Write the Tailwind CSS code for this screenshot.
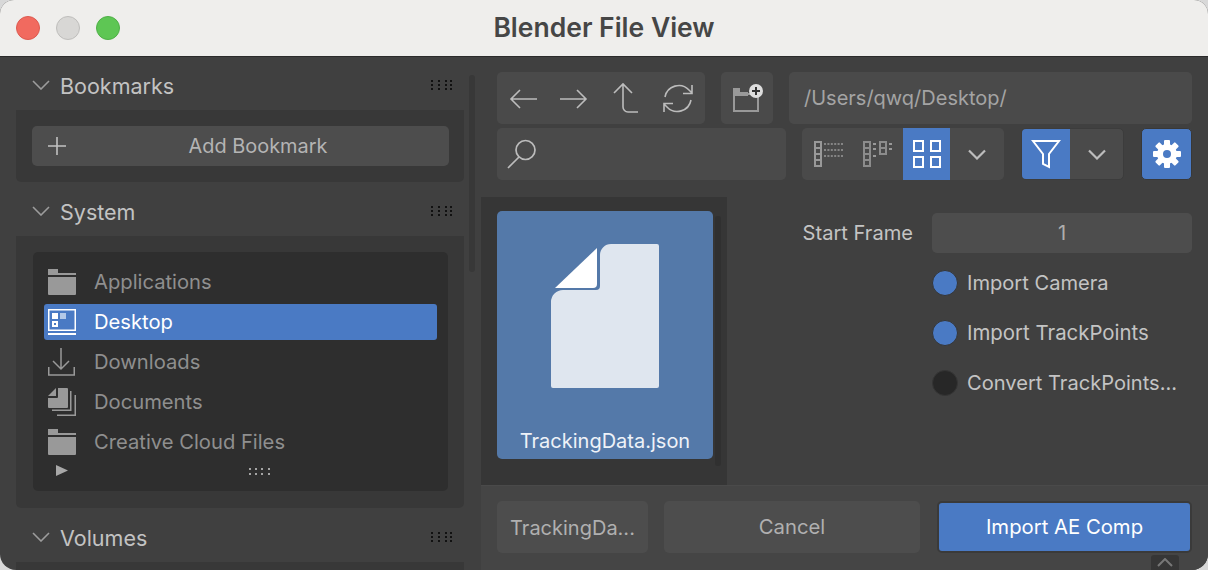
<!DOCTYPE html>
<html>
  <head>
    <meta charset="UTF-8" />
    <script src="https://cdn.jsdelivr.net/npm/@tailwindcss/browser@4"></script>
    <title>Blender File View</title>
  </head>
  <body class="bg-[#d8d8d8] font-['Inter','Liberation_Sans',sans-serif]">
    <div class="w-[1208px] h-[570px] rounded-t-[14px] rounded-b-[16px] overflow-hidden flex flex-col relative bg-[#404040]">
      <!-- title bar -->
      <div class="h-[57px] shrink-0 bg-[#efeeec] border-b border-[#2b2b2b] flex items-center relative">
        <div class="flex gap-[16px] pl-[16px] mb-[1px]">
          <span class="w-[24px] h-[24px] rounded-full bg-[#f16a5f] border border-[#dd5a50]"></span>
          <span class="w-[24px] h-[24px] rounded-full bg-[#d8d7d5] border border-[#bfbebc]"></span>
          <span class="w-[24px] h-[24px] rounded-full bg-[#5ec654] border border-[#4fb047]"></span>
        </div>
        <h1 class="absolute inset-x-0 top-[12px] text-center text-[26.5px] leading-[30px] font-semibold text-[#464646]">Blender File View</h1>
      </div>

      <div class="flex flex-1 min-h-0">
        <!-- sidebar -->
        <aside class="w-[481px] shrink-0 relative overflow-hidden">
          <div class="absolute left-[469px] top-[18px] w-[6px] h-[197px] rounded-full bg-[#383838]"></div>

          <div class="h-[53px] flex items-center pt-[3px] pl-[32px] pr-[29px] text-[#c3c3c3] text-[21.5px]">
            <svg class="w-[18px] h-[10px] mr-[10px]" viewBox="0 0 18 10" fill="none" stroke="#9c9c9c" stroke-width="1.6"><path d="M1 1l8 8 8-8" /></svg>
            <span class="flex-1 pt-[2px]">Bookmarks</span>
            <svg class="w-[22px] h-[11px]" viewBox="0 0 22 11" fill="#111"><path d="M1 0h2v2H1zM8 0h2v2H8zM15 0h2v2h-2zM20 0h2v2h-2zM1 4h2v2H1zM8 4h2v2H8zM15 4h2v2h-2zM20 4h2v2h-2zM1 8h2v2H1zM8 8h2v2H8zM15 8h2v2h-2zM20 8h2v2h-2z" /></svg>
          </div>
          <div class="ml-[16px] w-[448px] h-[72px] bg-[#383838] rounded-b-[5px] p-[16px]">
            <button class="w-[417px] h-[40px] bg-[#4d4d4d] rounded-[5px] relative text-[19.9px] text-[#b4b4b4] flex items-center justify-center">
              <svg class="absolute left-[16px] top-[11px] w-[18px] h-[18px]" viewBox="0 0 18 18" stroke="#c2c2c2" stroke-width="1.6"><path d="M9 0v18M0 9h18" /></svg>
              <span class="pl-[35px] pt-[1px]">Add Bookmark</span>
            </button>
          </div>

          <div class="h-[54px] flex items-center pt-[4px] pl-[32px] pr-[29px] text-[#c3c3c3] text-[21.5px]">
            <svg class="w-[18px] h-[10px] mr-[10px]" viewBox="0 0 18 10" fill="none" stroke="#9c9c9c" stroke-width="1.6"><path d="M1 1l8 8 8-8" /></svg>
            <span class="flex-1 pt-[3px]">System</span>
            <svg class="w-[22px] h-[11px]" viewBox="0 0 22 11" fill="#111"><path d="M1 0h2v2H1zM8 0h2v2H8zM15 0h2v2h-2zM20 0h2v2h-2zM1 4h2v2H1zM8 4h2v2H8zM15 4h2v2h-2zM20 4h2v2h-2zM1 8h2v2H1zM8 8h2v2H8zM15 8h2v2h-2zM20 8h2v2h-2z" /></svg>
          </div>
          <div class="ml-[16px] w-[448px] h-[272px] bg-[#383838] rounded-b-[5px] pt-[16px] px-[17px]">
            <div class="w-[415px] h-[239px] bg-[#2e2e2e] rounded-[5px] pt-[12px] px-[11px] relative text-[20.2px]">
              <div class="h-[40px] flex items-center text-[#8f8f8f] pb-[4px]">
                <svg class="w-[28px] h-[26px] ml-[4px] mr-[18px]" viewBox="0 0 28 26" fill="#999"><path d="M0 0h10v4h18v2H0zM0 8h28v17a1 1 0 0 1-1 1H1a1 1 0 0 1-1-1z" /></svg>
                <span>Applications</span>
              </div>
              <div class="h-[36px] flex items-center bg-[#4a7ac4] rounded-[3px] text-white mb-[4px]">
                <svg class="w-[28px] h-[26px] ml-[4px] mr-[18px]" viewBox="0 0 28 26" fill="none"><rect x=".75" y=".75" width="26.5" height="20.5" stroke="#fff" stroke-width="1.5" /><path d="M0 24h28v2H0zM4 4h6v6H4z" fill="#fff" /><path d="M12 4h6v6h-6z" fill="#b4c9e8" /><rect x="5" y="13" width="4" height="4" stroke="#fff" stroke-width="2" /></svg>
                <span>Desktop</span>
              </div>
              <div class="h-[40px] flex items-center text-[#8f8f8f] pb-[4px]">
                <svg class="w-[28px] h-[28px] ml-[4px] mr-[18px]" viewBox="0 0 28 28" fill="none" stroke="#999" stroke-width="1.5"><path d="M13 0v21M5 13l8 8 8-8M.75 19v8h25.5v-8" /></svg>
                <span>Downloads</span>
              </div>
              <div class="h-[40px] flex items-center text-[#8f8f8f] pb-[4px]">
                <svg class="w-[28px] h-[28px] ml-[4px] mr-[18px]" viewBox="0 0 28 28"><path d="M0 8l8-8v8zM10 0h9a1 1 0 0 1 1 1v18a1 1 0 0 1-1 1H1a1 1 0 0 1-1-1V10h9a1 1 0 0 0 1-1z" fill="#999" /><path d="M22.75 3v19.25H4M27.25 7v20.25H9" fill="none" stroke="#999" stroke-width="1.5" /></svg>
                <span>Documents</span>
              </div>
              <div class="h-[40px] flex items-center text-[#8f8f8f] pb-[4px]">
                <svg class="w-[28px] h-[26px] ml-[4px] mr-[18px]" viewBox="0 0 28 26" fill="#999"><path d="M0 0h10v4h18v2H0zM0 8h28v17a1 1 0 0 1-1 1H1a1 1 0 0 1-1-1z" /></svg>
                <span>Creative Cloud Files</span>
              </div>
              <svg class="absolute left-[23px] top-[213px] w-[12px] h-[11px]" viewBox="0 0 12 11" fill="#a8a8a8"><path d="M0 0l12 5.5L0 11z" /></svg>
              <svg class="absolute left-[216px] top-[216px] w-[22px] h-[7px]" viewBox="0 0 22 7" fill="#a4a4a4"><path d="M0 0h2v2H0zM6 0h2v2H6zM12 0h2v2h-2zM19 0h2v2h-2zM0 5h2v2H0zM6 5h2v2H6zM12 5h2v2h-2zM19 5h2v2h-2z" /></svg>
            </div>
          </div>

          <div class="h-[54px] flex items-center pt-[4px] pl-[32px] pr-[29px] text-[#c3c3c3] text-[21.5px]">
            <svg class="w-[18px] h-[10px] mr-[10px]" viewBox="0 0 18 10" fill="none" stroke="#9c9c9c" stroke-width="1.6"><path d="M1 1l8 8 8-8" /></svg>
            <span class="flex-1 pt-[3px]">Volumes</span>
            <svg class="w-[22px] h-[11px]" viewBox="0 0 22 11" fill="#111"><path d="M1 0h2v2H1zM8 0h2v2H8zM15 0h2v2h-2zM20 0h2v2h-2zM1 4h2v2H1zM8 4h2v2H8zM15 4h2v2h-2zM20 4h2v2h-2zM1 8h2v2H1zM8 8h2v2H8zM15 8h2v2h-2zM20 8h2v2h-2z" /></svg>
          </div>
          <div class="ml-[16px] w-[448px] h-[20px] bg-[#383838]"></div>
        </aside>

        <!-- main -->
        <main class="flex-1 min-w-0 flex flex-col relative">
          <div class="flex flex-col gap-[4px] pl-[16px] pr-[16px] pt-[15px] h-[140px] shrink-0">
            <div class="flex gap-[16px] h-[52px]">
              <div class="w-[208px] bg-[#4a4a4a] rounded-[5px] flex items-center">
                <svg class="w-[208px] h-[52px]" viewBox="0 0 208 52" fill="none" stroke="#bcbcbc" stroke-width="1.6"><path d="M14 27h26M23 18l-9 9 9 9M63 27h26M80 18l9 9-9 9M117 21l9-9 9 9M126 12v23a5 5 0 0 0 5 5h10" /><path d="M168 25a14 14 0 0 1 24-7l3 3M195 13v8.5h-9M194 28a14 14 0 0 1-24 7l-3-3M167 40v-8.5h9" /></svg>
              </div>
              <div class="w-[52px] bg-[#4a4a4a] rounded-[5px] flex items-center justify-center pl-[2px]">
                <svg class="w-[30px] h-[28px]" viewBox="0 0 30 28" fill="none"><path d="M1 10h24v17H1z" stroke="#999" stroke-width="2" /><path d="M0 4h7v4h8v4H0z" fill="#999" /><circle cx="23" cy="7" r="7" fill="#ddd" /><path d="M23 3v8M19 7h8" stroke="#333" stroke-width="2" /></svg>
              </div>
              <div class="flex-1 bg-[#4a4a4a] rounded-[5px] flex items-center px-[15px] text-[20px] text-[#a4a4a4]">/Users/qwq/Desktop/</div>
            </div>
            <div class="flex h-[52px]">
              <div class="w-[289px] bg-[#4a4a4a] rounded-[5px] flex items-center pl-[10px]">
                <svg class="w-[30px] h-[30px]" viewBox="0 0 30 30" fill="none" stroke="#bcbcbc" stroke-width="1.7"><circle cx="18.5" cy="11" r="9.5" /><path d="M12 18L1 29" /></svg>
              </div>
              <div class="ml-[16px] w-[202px] bg-[#4a4a4a] rounded-[5px] flex overflow-hidden">
                <div class="w-[50px] flex items-center justify-center">
                  <svg class="w-[30px] h-[26px] ml-[3px]" viewBox="0 0 30 26" fill="none"><path d="M1 1h6v24H1zM1 7h6M1 13h6M1 19h6" stroke="#999" stroke-width="2" /><path d="M10 3h20M10 9h20M10 15h20" stroke="#999" stroke-width="1.6" stroke-dasharray="2 1.4" /></svg>
                </div>
                <div class="w-[51px] flex items-center justify-center">
                  <svg class="w-[30px] h-[26px]" viewBox="0 0 30 26" fill="none"><path d="M1 1h6v24H1zM1 7h6M1 13h6M1 19h6M17 1h6v12h-6zM17 7h6" stroke="#8c8c8c" stroke-width="2" /><path d="M10 3h3M10 8h3M10 15h3M26 3h3M26 8h3" stroke="#999" stroke-width="2" /></svg>
                </div>
                <div class="w-[47px] bg-[#4a7ac4] flex items-center justify-center">
                  <svg class="w-[28px] h-[28px]" viewBox="0 0 28 28" fill="none" stroke="#fff" stroke-width="2"><rect x="1" y="1" width="9" height="10" /><rect x="18" y="1" width="9" height="10" /><rect x="1" y="17" width="9" height="10" /><rect x="18" y="17" width="9" height="10" /></svg>
                </div>
                <div class="flex-1 flex items-center justify-center">
                  <svg class="w-[18px] h-[11px]" viewBox="0 0 18 11" fill="none" stroke="#bdbdbd" stroke-width="2.2"><path d="M1 1.5l8 8 8-8" /></svg>
                </div>
              </div>
              <div class="ml-[17px] w-[103px] bg-[#4a4a4a] rounded-[5px] flex overflow-hidden border border-[#3c3c3c]">
                <div class="w-[48px] bg-[#4a7ac4] flex items-center justify-center">
                  <svg class="w-[30px] h-[30px]" viewBox="0 0 30 30" fill="none" stroke="#fff" stroke-width="2"><path d="M2 2h26L18 15v13l-6-3V15z" /></svg>
                </div>
                <div class="flex-1 flex items-center justify-center">
                  <svg class="w-[18px] h-[11px]" viewBox="0 0 18 11" fill="none" stroke="#bdbdbd" stroke-width="2.2"><path d="M1 1.5l8 8 8-8" /></svg>
                </div>
              </div>
              <div class="ml-[17px] w-[51px] bg-[#4a7ac4] rounded-[5px] flex items-center justify-center border border-[#383838]">
                <svg class="w-[28px] h-[28px]" viewBox="0 0 28 28" fill="#fff"><rect x="11" y="0" width="6" height="28" rx="1" /><rect x="11" y="0" width="6" height="28" rx="1" transform="rotate(45 14 14)" /><rect x="11" y="0" width="6" height="28" rx="1" transform="rotate(90 14 14)" /><rect x="11" y="0" width="6" height="28" rx="1" transform="rotate(135 14 14)" /><circle cx="14" cy="14" r="10" /><circle cx="14" cy="14" r="4" fill="#4a7ac4" /></svg>
              </div>
            </div>
          </div>

          <div class="flex h-[288px] shrink-0">
            <div class="w-[246px] bg-[#363636] pt-[14px] pl-[16px] relative">
              <div class="absolute left-[234px] top-[19px] w-[6px] h-[250px] bg-[#303030] rounded-full"></div>
              <div class="w-[216px] h-[248px] bg-[#5479a9] rounded-[5px] flex flex-col items-center relative">
                <svg class="mt-[33px] w-[108px] h-[144px]" viewBox="0 0 108 144"><path d="M60 0h46a2 2 0 0 1 2 2v140a2 2 0 0 1-2 2H2a2 2 0 0 1-2-2V58a12 12 0 0 1 12-12h33a4 4 0 0 0 4-4V11A11 11 0 0 1 60 0z" fill="#dfe6ef" /><path d="M4 44L46 4v36a4 4 0 0 1-4 4z" fill="#fff" /></svg>
                <div class="mt-[39px] text-[20px] leading-[28px] text-[#eef2f8]">TrackingData.json</div>
              </div>
            </div>
            <div class="flex-1 pt-[16px] pr-[16px] grid grid-cols-[205px_1fr] grid-rows-[40px_50px_50px_50px] text-[20.1px] text-[#c4c4c4]">
              <div class="flex items-center justify-end pr-[19px] pt-[1px]">Start Frame</div>
              <div class="bg-[#4d4d4d] rounded-[5px] flex items-center justify-center pt-[1px] text-[#adadad]">1</div>
              <label class="col-start-2 flex items-center gap-[9px] translate-y-[5px]"><span class="w-[26px] h-[26px] rounded-full bg-[#4a7ac4] border border-[#353535]"></span><span>Import Camera</span></label>
              <label class="col-start-2 flex items-center gap-[9px] translate-y-[5px]"><span class="w-[26px] h-[26px] rounded-full bg-[#4a7ac4] border border-[#353535]"></span><span class="text-[20.4px]">Import TrackPoints</span></label>
              <label class="col-start-2 flex items-center gap-[9px] translate-y-[5px] whitespace-nowrap"><span class="w-[26px] h-[26px] rounded-full bg-[#272727] border border-[#353535]"></span><span>Convert TrackPoints...</span></label>
            </div>
          </div>

          <div class="flex-1 bg-[#454545] border-t border-[#4a4a4a] flex gap-[16px] pl-[16px] pt-[15px] text-[20.3px]">
            <button class="w-[151px] h-[52px] bg-[#4d4d4d] rounded-[5px] text-[20px] text-[#b0b0b0] pt-[1px]">TrackingDa...</button>
            <button class="w-[256px] h-[52px] bg-[#4d4d4d] rounded-[5px] text-[#b0b0b0] pt-[1px]">Cancel</button>
            <button class="ml-[1px] w-[255px] h-[52px] bg-[#4a7ac4] rounded-[5px] border-2 border-[#3a3a3a] text-white pt-[1px] whitespace-nowrap">Import AE Comp</button>
          </div>
          <div class="absolute right-[29px] bottom-0 w-[28px] h-[15px] bg-[#363636] rounded-t-[3px] flex items-center justify-center">
            <svg class="w-[16px] h-[9px]" viewBox="0 0 16 9" fill="none" stroke="#777" stroke-width="2"><path d="M1 8l7-7 7 7" /></svg>
          </div>
        </main>
      </div>
    </div>
  </body>
</html>
